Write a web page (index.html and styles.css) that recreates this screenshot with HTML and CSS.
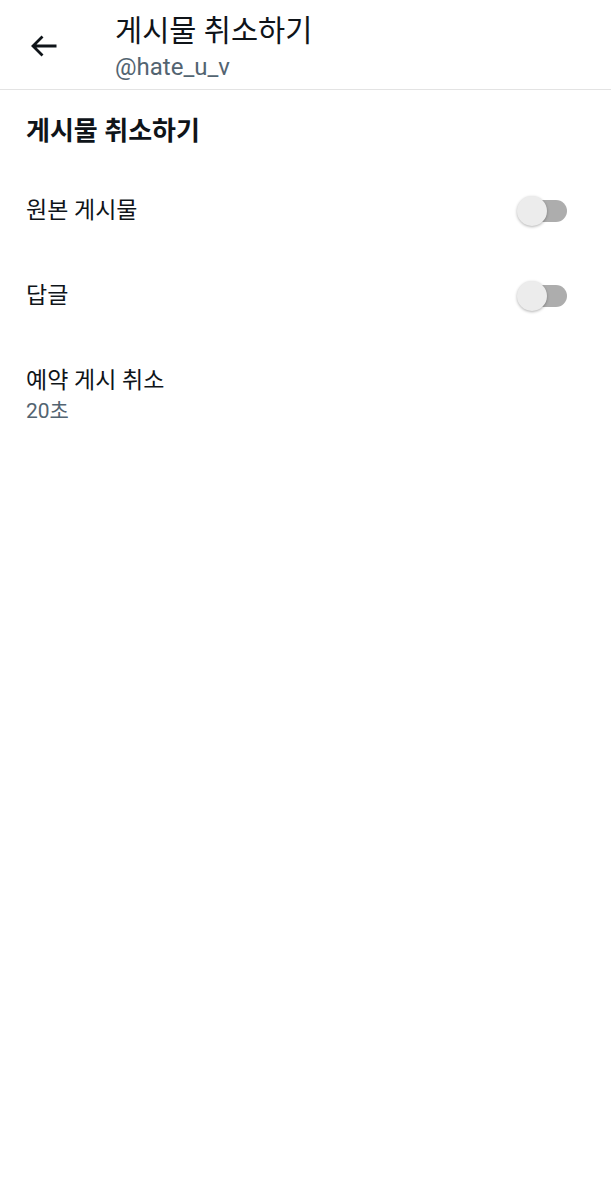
FILE: index.html
```html
<!DOCTYPE html>
<html lang="ko">
<head>
<meta charset="utf-8">
<link rel="stylesheet" href="styles.css">
</head>
<body>
<header class="topbar">
  <button class="back" aria-label="뒤로">
    <svg width="28" height="24" viewBox="0 0 28 24"><path d="M26.5 12H3.5M12.5 2.5L3 12l9.5 9.5" fill="none" stroke="#0f1419" stroke-width="2.8"/></svg>
  </button>
  <div class="titles">
    <div class="title">게시물 취소하기</div>
    <div class="handle">@hate_u_v</div>
  </div>
</header>
<main class="content">
  <h2 class="section">게시물 취소하기</h2>
  <div class="row">
    <span class="label">원본 게시물</span>
    <span class="switch"><span class="track"></span><span class="thumb"></span></span>
  </div>
  <div class="row">
    <span class="label">답글</span>
    <span class="switch"><span class="track"></span><span class="thumb"></span></span>
  </div>
  <div class="row stacked">
    <span class="label">예약 게시 취소</span>
    <span class="sub">20초</span>
  </div>
</main>
</body>
</html>
```
FILE: styles.css
```css
* { box-sizing: border-box; }
html, body { margin: 0; padding: 0; background: #fff; }
body {
  font-family: Roboto, "Noto Sans CJK KR", sans-serif;
  color: #0f1419;
  width: 611px;
}
.topbar {
  display: flex;
  align-items: flex-start;
  height: 90px;
  border-bottom: 1px solid #e3e3e3;
}
.back {
  border: 0;
  background: none;
  padding: 0;
  margin: 34px 0 0 30px;
  width: 28px;
  height: 24px;
  display: flex;
}
.titles {
  margin-left: 57px;
  padding-top: 12px;
  display: flex;
  flex-direction: column;
}
.title {
  font-size: 29.5px;
  line-height: 38px;
  font-weight: 400;
}
.handle {
  font-size: 24px;
  line-height: 30px;
  margin-top: 2px;
  color: #536471;
}
.content {
  padding: 0 0 0 26px;
}
.section {
  margin: 0;
  padding-top: 24px;
  padding-bottom: 20px;
  font-size: 26px;
  line-height: 34px;
  font-weight: 700;
}
.row {
  display: flex;
  align-items: center;
  justify-content: space-between;
  height: 85px;
  padding-right: 44px;
}
.label {
  font-size: 23px;
  line-height: 30px;
}
.stacked {
  flex-direction: column;
  align-items: flex-start;
  justify-content: flex-start;
  padding-top: 28px;
  height: auto;
}
.sub {
  font-size: 21px;
  line-height: 30px;
  color: #536471;
}
.switch {
  position: relative;
  width: 50px;
  height: 32px;
  display: block;
}
.track {
  position: absolute;
  left: 6px;
  right: 0;
  top: 5px;
  height: 22px;
  border-radius: 11px;
  background: #adadad;
}
.thumb {
  position: absolute;
  left: 0;
  top: 1px;
  width: 30px;
  height: 30px;
  border-radius: 50%;
  background: #ececec;
  box-shadow: 0 1px 3px rgba(0,0,0,0.3);
}
```
